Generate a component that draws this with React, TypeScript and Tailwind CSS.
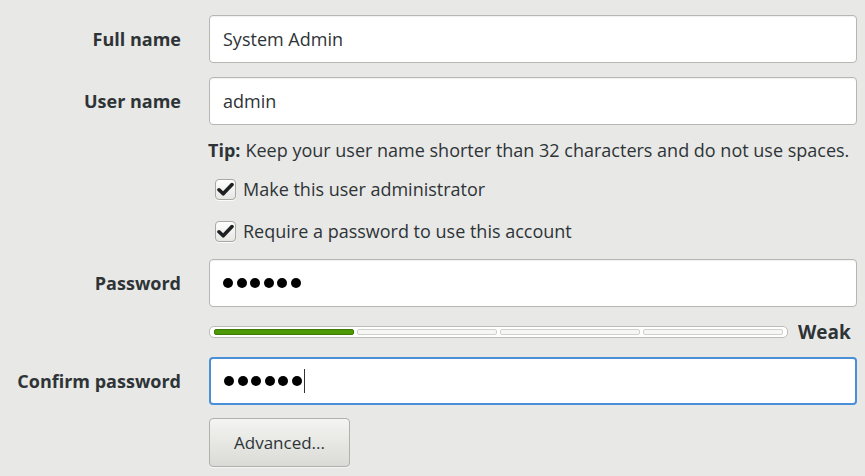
import React from 'react';

const font = { fontFamily: '"Open Sans", "Noto Sans", "DejaVu Sans", sans-serif' };

function Label({ children }: { children: React.ReactNode }) {
  return (
    <div className="w-[181px] shrink-0 text-right text-[18px] font-bold text-[#2e3436] whitespace-nowrap">{children}</div>
  );
}

function Field({ label, children, focused }: { label: string; children: React.ReactNode; focused?: boolean }) {
  return (
    <div className="flex items-center h-[48px]">
      <Label>{label}</Label>
      <div
        className={
          focused
            ? 'ml-[28px] flex-1 h-full flex items-center px-[13px] bg-white rounded-[4px] border-2 border-[#4a90d9] text-[18px] text-[#2e3436]'
            : 'ml-[28px] flex-1 h-full flex items-center px-[13px] bg-white rounded-[4px] border border-[#b6b6b3] shadow-[inset_0_1px_1px_rgba(0,0,0,0.06)] text-[18px] text-[#2e3436]'
        }
      >
        {children}
      </div>
    </div>
  );
}

function Dots({ cursor }: { cursor?: boolean }) {
  return (
    <div className="flex items-center">
      {[0, 1, 2, 3, 4, 5].map((i) => (
        <span key={i} className="w-[10px] h-[10px] rounded-full bg-black mr-[3.5px]" />
      ))}
      {cursor && <span className="w-[1px] h-[24px] bg-[#2e3436] -ml-[1px]" />}
    </div>
  );
}

function Check({ label }: { label: string }) {
  return (
    <div className="flex items-center h-[30px] pl-[215px]">
      <span className="w-[21px] h-[21px] rounded-[4px] border border-[#a8a8a4] bg-gradient-to-b from-white to-[#e6e6e3] flex items-center justify-center shadow-[0_1px_0_rgba(255,255,255,0.8)]">
        <svg width="17" height="15" viewBox="0 0 17 15">
          <path d="M2 7.8 L6.2 11.8 L15 2.6" fill="none" stroke="#1e2122" strokeWidth="3.6" strokeLinecap="round" strokeLinejoin="round" />
        </svg>
      </span>
      <span className="ml-[7px] text-[18px] text-[#2e3436] whitespace-nowrap">{label}</span>
    </div>
  );
}

export default function App() {
  return (
    <div className="w-[865px] h-[476px] bg-[#e8e8e7] overflow-hidden pr-[8px] pt-[15px]" style={font}>
      <Field label="Full name">System Admin</Field>
      <div className="mt-[14px]">
        <Field label="User name">admin</Field>
      </div>

      <div className="mt-[12px] h-[26px] flex items-center pl-[208px] text-[18px] text-[#2e3436] whitespace-nowrap">
        <span className="font-bold">Tip:</span>
        <span className="ml-[5px]">Keep your user name shorter than 32 characters and do not use spaces.</span>
      </div>

      <div className="mt-[11px]">
        <Check label="Make this user administrator" />
      </div>
      <div className="mt-[12px]">
        <Check label="Require a password to use this account" />
      </div>

      <div className="mt-[13px]">
        <Field label="Password">
          <Dots />
        </Field>
      </div>

      {/* strength meter */}
      <div className="mt-[19px] flex items-center h-[12px]">
        <div className="ml-[209px] w-[579px] h-[12px] rounded-[5px] border border-[#bdbdb9] bg-white flex items-center gap-[3px] px-[4px]">
          <div className="flex-1 h-[6px] rounded-[2px] bg-[#4e9a06] border border-[#3d7a05]" />
          <div className="flex-1 h-[6px] rounded-[2px] bg-[#f6f6f5] border border-[#d0d0cd]" />
          <div className="flex-1 h-[6px] rounded-[2px] bg-[#f6f6f5] border border-[#d0d0cd]" />
          <div className="flex-1 h-[6px] rounded-[2px] bg-[#f6f6f5] border border-[#d0d0cd]" />
        </div>
        <span className="ml-[10px] text-[19px] font-bold text-[#2e3436]">Weak</span>
      </div>

      <div className="mt-[19px]">
        <Field label="Confirm password" focused>
          <Dots cursor />
        </Field>
      </div>

      <div className="mt-[13px] pl-[209px]">
        <button className="w-[141px] h-[49px] rounded-[4px] border border-[#b0b0ac] bg-gradient-to-b from-[#f4f4f2] to-[#dadad6] text-[17px] text-[#2e3436] shadow-[0_1px_0_rgba(255,255,255,0.6)]">
          Advanced...
        </button>
      </div>
    </div>
  );
}
